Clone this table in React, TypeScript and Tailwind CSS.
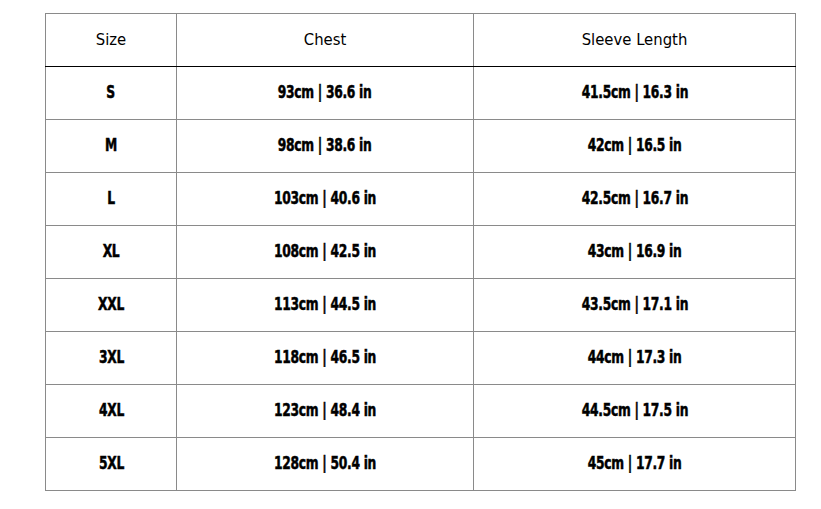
const rows = [
  ['S', '93cm | 36.6 in', '41.5cm | 16.3 in'],
  ['M', '98cm | 38.6 in', '42cm | 16.5 in'],
  ['L', '103cm | 40.6 in', '42.5cm | 16.7 in'],
  ['XL', '108cm | 42.5 in', '43cm | 16.9 in'],
  ['XXL', '113cm | 44.5 in', '43.5cm | 17.1 in'],
  ['3XL', '118cm | 46.5 in', '44cm | 17.3 in'],
  ['4XL', '123cm | 48.4 in', '44.5cm | 17.5 in'],
  ['5XL', '128cm | 50.4 in', '45cm | 17.7 in'],
];

const cell = 'border border-[#8a8a8a] text-center align-middle';

export default function App() {
  return (
    <div className="w-[821px] h-[509px] bg-white pt-[13px] pl-[45px]">
      <table className="border-collapse table-fixed w-[750px] text-black">
        <colgroup>
          <col className="w-[131px]" />
          <col className="w-[297px]" />
          <col className="w-[322px]" />
        </colgroup>
        <thead>
          <tr className="h-[53px] text-[16.5px] font-['DejaVu_Sans_Condensed','DejaVu_Sans',sans-serif]">
            <th className={`${cell} font-normal border-b-black`}>Size</th>
            <th className={`${cell} font-normal border-b-black`}>Chest</th>
            <th className={`${cell} font-normal border-b-black`}>Sleeve Length</th>
          </tr>
        </thead>
        <tbody>
          {rows.map((r) => (
            <tr key={r[0]} className="h-[53px] text-[18px] font-bold font-['DejaVu_Sans_Condensed',sans-serif]">
              {r.map((c, i) => (
                <td key={i} className={cell}>
                  <span className="inline-block scale-x-[0.76] -translate-y-[2px] tracking-[-0.4px] [-webkit-text-stroke:0.5px_black]">
                    {c}
                  </span>
                </td>
              ))}
            </tr>
          ))}
        </tbody>
      </table>
    </div>
  );
}
